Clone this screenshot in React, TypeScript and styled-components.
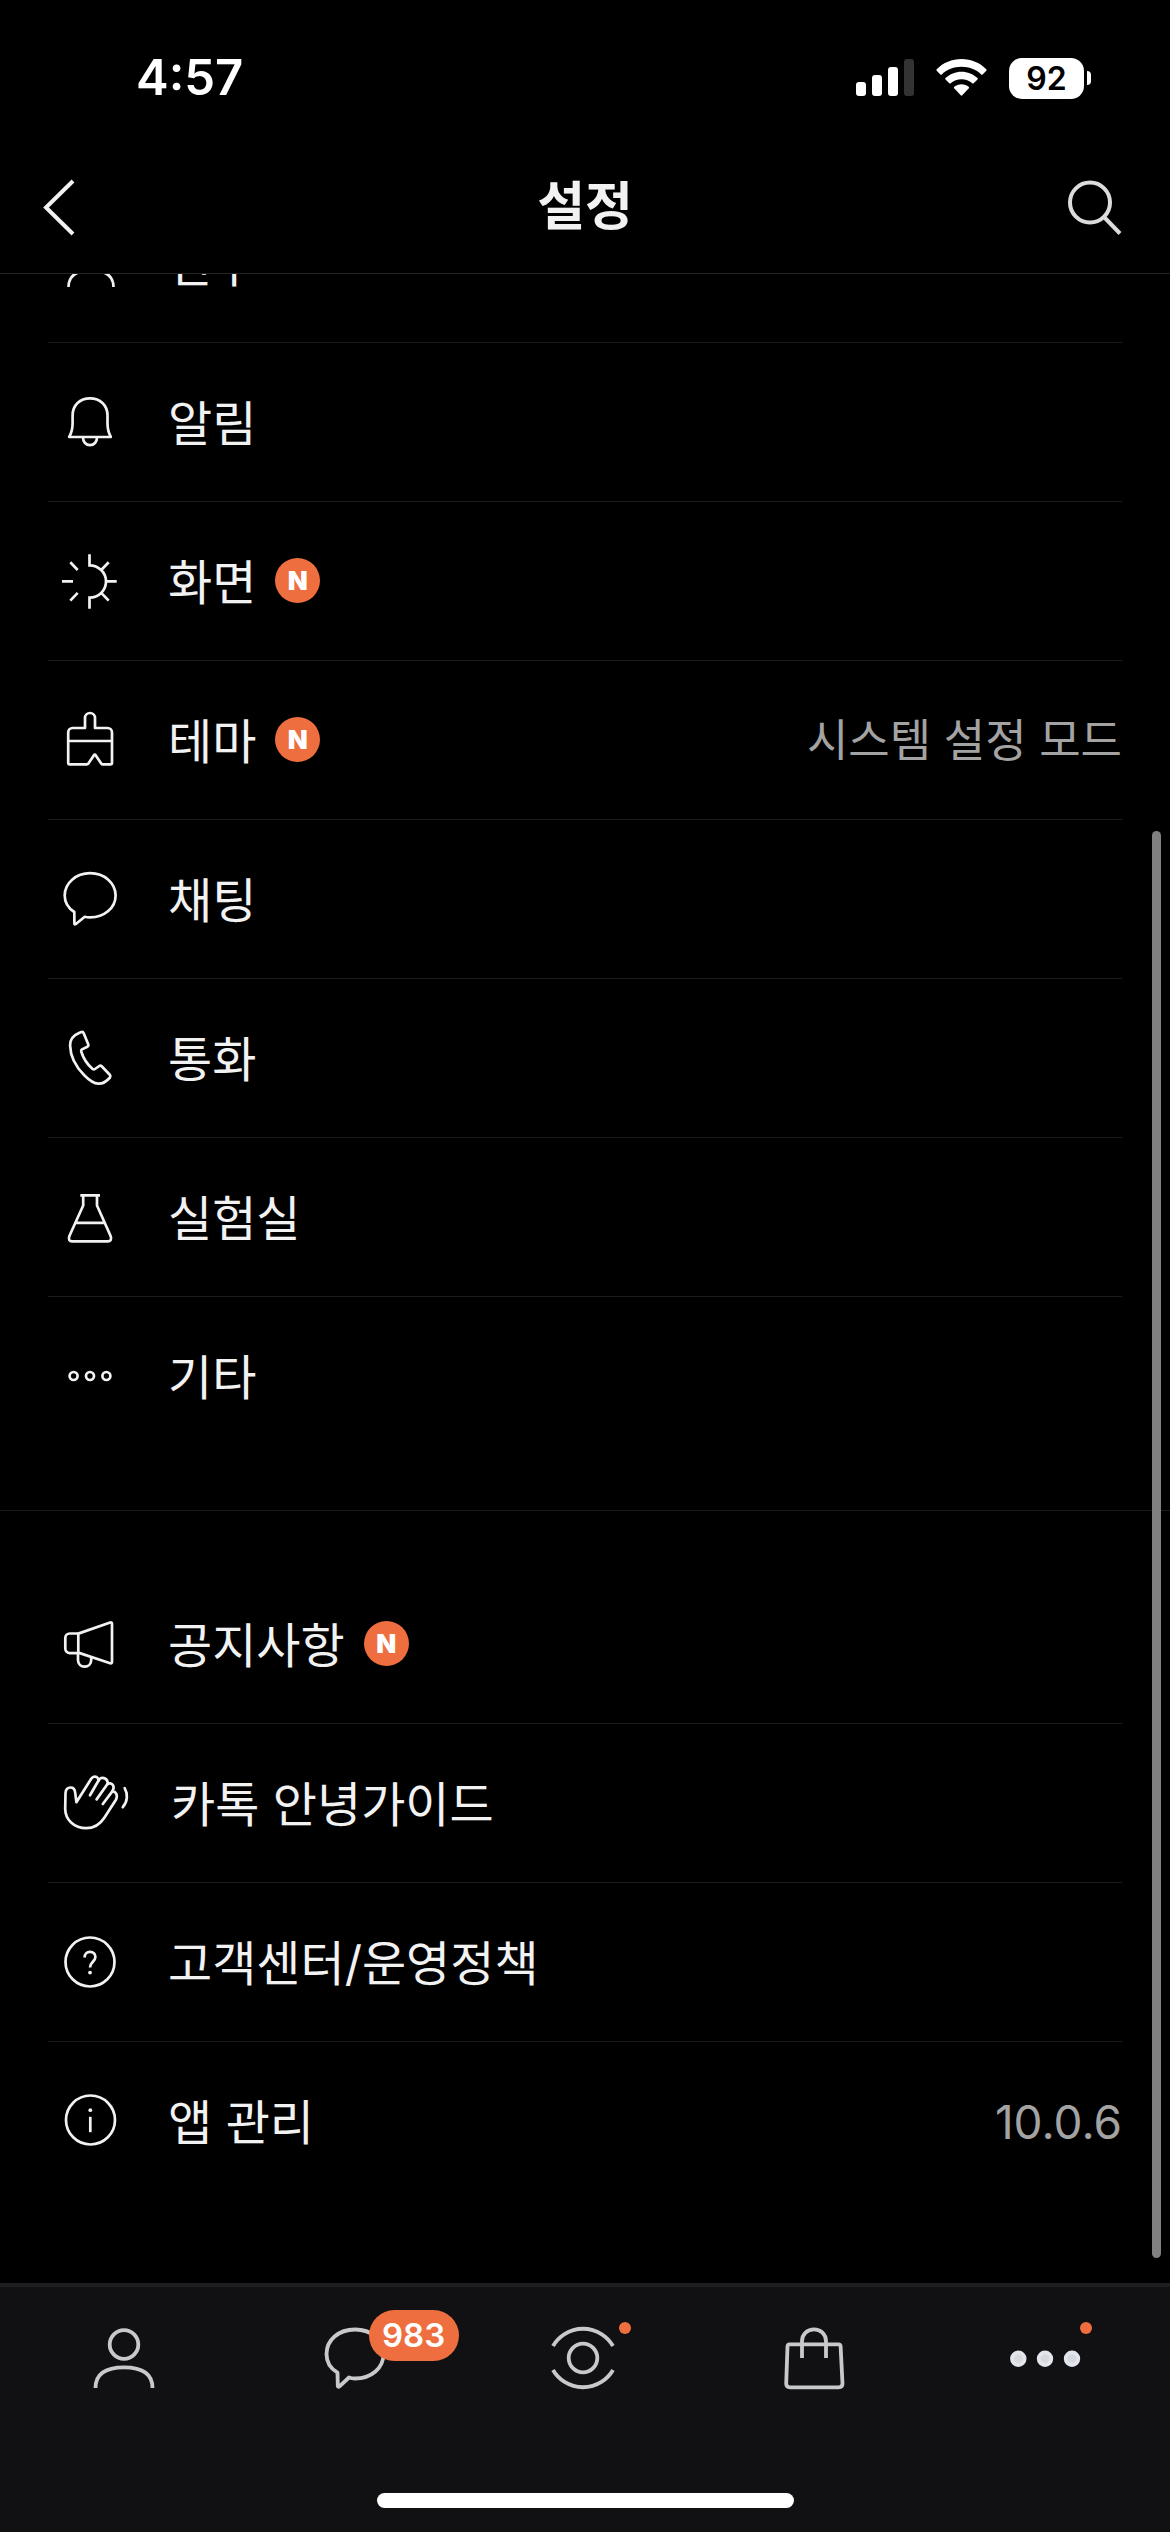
import React from "react";
import styled, { createGlobalStyle } from "styled-components";

const colors = {
  bg: "#000000",
  text: "#f2f2f2",
  muted: "#a3a3a3",
  line: "#1c1c1d",
  accent: "#ee6e3f",
  bar: "#111113",
  barIcon: "#c8c9cb",
};

const GlobalStyle = createGlobalStyle`
  *, *::before, *::after { box-sizing: border-box; }
  body {
    margin: 0;
    background: ${colors.bg};
    color: ${colors.text};
    font-family: Inter, "Noto Sans CJK KR", sans-serif;
  }
  button {
    margin: 0;
    padding: 0;
    border: 0;
    background: none;
    color: inherit;
    font: inherit;
    cursor: pointer;
  }
  svg { display: block; flex: none; }
`;

const Screen = styled.div`
  display: flex;
  flex-direction: column;
  height: 100vh;
  background: ${colors.bg};
`;

const StatusBar = styled.div`
  display: flex;
  align-items: center;
  justify-content: space-between;
  padding: 48px 79px 33px 136px;
`;

const Clock = styled.time`
  font-size: 49px;
  line-height: 60px;
  font-weight: 600;
  color: #ffffff;
`;

const StatusIcons = styled.div`
  display: flex;
  align-items: center;
  gap: 22px;
`;

const Battery = styled.div`
  display: flex;
  align-items: center;
  gap: 3px;
`;

const BatteryLevel = styled.span`
  width: 75px;
  border-radius: 13px;
  background: #ffffff;
  color: #000000;
  font-size: 32px;
  line-height: 41px;
  font-weight: 600;
  text-align: center;
`;

const BatteryTip = styled.span`
  width: 4px;
  height: 14px;
  border-radius: 0 4px 4px 0;
  background: #ffffff;
`;

const NavBar = styled.header`
  display: grid;
  grid-template-columns: 1fr auto 1fr;
  align-items: center;
  padding: 30px 36px;
  border-bottom: 1px solid #262627;
`;

const NavButton = styled.button<{ $side: "start" | "end" }>`
  justify-self: ${(p) => p.$side};
`;

const Title = styled.h1`
  margin: 0;
  font-size: 52px;
  line-height: 72px;
  font-weight: 600;
`;

const Content = styled.main`
  position: relative;
  flex: 1;
  min-height: 0;
  display: flex;
  flex-direction: column;
  justify-content: flex-end;
  padding-bottom: 83px;
  overflow: hidden;
`;

const ScrollThumb = styled.div`
  position: absolute;
  top: 557px;
  right: 9px;
  bottom: 25px;
  width: 9px;
  border-radius: 5px;
  background: #808080;
`;

const Group = styled.ul`
  margin: 0;
  padding: 0 48px;
  list-style: none;

  & + & {
    margin-top: 55px;
    padding-top: 54px;
    border-top: 1px solid ${colors.line};
  }
`;

const Item = styled.li`
  & + & {
    border-top: 1px solid ${colors.line};
  }
`;

const Row = styled.button`
  display: flex;
  align-items: center;
  width: 100%;
  height: 158px;
  text-align: left;
`;

const Label = styled.span`
  margin-left: 36px;
  padding-top: 3px;
  font-size: 48px;
  line-height: 72px;
`;

const NewBadge = styled.span`
  width: 45px;
  margin: 0 0 2px 19px;
  border-radius: 50%;
  background: ${colors.accent};
  color: #ffffff;
  font-size: 26px;
  line-height: 45px;
  font-weight: 900;
  text-align: center;
`;

const Value = styled.span<{ $size: number }>`
  margin-left: auto;
  padding-top: 2px;
  color: ${colors.muted};
  font-size: ${(p) => p.$size}px;
  line-height: 72px;
`;

const TabBar = styled.nav`
  display: flex;
  flex-direction: column;
  align-items: center;
  border-top: 4px solid #1d1e20;
  background: ${colors.bar};
`;

const Tabs = styled.div`
  display: flex;
  width: 100%;
  padding: 35px 9px 99px;
`;

const Tab = styled.button`
  flex: 1;
  display: flex;
  justify-content: center;
`;

const TabIcon = styled.span`
  position: relative;
  color: ${colors.barIcon};
`;

const CountBadge = styled.span`
  position: absolute;
  top: -12px;
  left: 50px;
  width: 90px;
  border-radius: 26px;
  background: ${colors.accent};
  color: #ffffff;
  font-size: 33px;
  line-height: 51px;
  font-weight: 600;
  text-align: center;
`;

const DotBadge = styled.span`
  position: absolute;
  top: 0;
  right: -10px;
  width: 12px;
  height: 12px;
  border-radius: 50%;
  background: ${colors.accent};
`;

const HomeIndicator = styled.div`
  width: 417px;
  height: 15px;
  margin-bottom: 24px;
  border-radius: 8px;
  background: #ffffff;
`;

const RowSvg = styled.svg.attrs<{ $width?: number }>(({ $width = 84 }) => ({
  viewBox: `0 0 ${$width} 84`,
  width: $width,
  height: 84,
  "aria-hidden": true,
}))`
  fill: none;
  stroke: ${colors.text};
  stroke-width: 2.7;
  stroke-linejoin: round;
`;

const TabSvg = styled.svg.attrs({
  viewBox: "0 0 72 72",
  width: 72,
  height: 72,
  "aria-hidden": true,
})`
  fill: none;
  stroke: currentColor;
  stroke-width: 3.8;
  stroke-linejoin: round;
`;

const FriendIcon = () => (
  <RowSvg>
    <circle cx="43" cy="31" r="12" />
    <path d="M20.5 66C20.5 54 29 49.5 43 49.5S65.5 54 65.5 66" />
  </RowSvg>
);

const BellIcon = () => (
  <RowSvg>
    <path d="M21.2 57C24 52 24.6 48 24.6 43V35.5C24.6 25 32 18.3 42 18.3S59.5 25 59.5 35.5V43C59.5 48 60 52 62.8 57Z" />
    <path d="M35 57.5C35 62 38 65.2 42 65.2S49 62 49 57.5" />
  </RowSvg>
);

const DisplayIcon = () => (
  <RowSvg>
    <path d="M41.5 15.3V26.3A16.5 16.2 0 0 1 41.5 58.7V69.7" strokeLinejoin="miter" />
    <path d="M58.5 42.4H68.7M14 42.4H25M22.3 23.3L29.7 31M22.3 61.6L29.7 53.9M60.7 23.3L53.2 31M60.7 61.6L53.2 53.9" />
  </RowSvg>
);

const ThemeIcon = () => (
  <RowSvg>
    <path d="M37 30V20A5 5 0 0 1 47 20V30H59.5A4.5 4.5 0 0 1 64 34.5V64.8Q64 66.3 62.5 66.3H54.8Q53.8 66.3 53.2 65.4L47.8 57.4Q46.8 56 45.8 57.4L40.4 65.4Q39.8 66.3 38.8 66.3H21.7Q20.2 66.3 20.2 64.8V34.5A4.5 4.5 0 0 1 24.7 30Z" />
    <path d="M20.2 43H64" />
  </RowSvg>
);

const ChatIcon = () => (
  <RowSvg>
    <path d="M26.3 55C20.2 51 16.7 45.2 16.7 38.4C16.7 26 28 16.2 42.2 16.2S67.6 26 67.6 38.4S56.3 60.4 42.2 60.4C40.3 60.4 38.3 60.3 36.7 59.8L27.6 67.2Q26.5 67.9 26.4 66.6Z" />
  </RowSvg>
);

const PhoneIcon = () => (
  <RowSvg>
    <path d="M31 17L33.5 16Q35 15.6 35.6 17L40.2 28.3Q40.8 30 39.4 30.7L34 33.4Q32.8 34.2 33.2 35.5C35.2 42 39.5 48.6 44.6 53Q45.8 53.8 47 53L51.3 50Q52.6 49.3 53.7 50.3L62 59Q63 60.3 62 61.5C58.5 65.5 54.5 67.9 50.3 67.7C46.2 67.5 41 64 36.5 59.5C28 51 22.3 40 22.1 29.5C22 23 25.5 19.2 31 17Z" />
  </RowSvg>
);

const FlaskIcon = () => (
  <RowSvg>
    <path d="M32.3 20.4H52M35.2 20.4V30.5L21.4 61Q20.4 63.5 21.3 65Q22.2 66.4 24 66.4H60Q61.8 66.4 62.7 65Q63.6 63.5 62.6 61L49 30.5V20.4M27.5 47.8H56.8" />
  </RowSvg>
);

const EtcIcon = () => (
  <RowSvg>
    <circle cx="25.6" cy="42" r="4" />
    <circle cx="42" cy="42" r="4" />
    <circle cx="58.4" cy="42" r="4" />
  </RowSvg>
);

const NoticeIcon = () => (
  <RowSvg>
    <path d="M30.3 31.5H21.8A4.5 4.5 0 0 0 17.3 36V46.6A4.5 4.5 0 0 0 21.8 51.1H30.3" />
    <path d="M30.3 31.6L62.2 20.5Q64 20 64 21.8V60Q64 61.8 62.2 61.3L30.3 50.6Z" />
    <path d="M30 50.8V58C30 62 32.8 64.6 36.6 64.6S43.2 62 43.2 58V55.2" />
  </RowSvg>
);

const HandIcon = () => (
  <RowSvg $width={87} strokeLinecap="round">
    <path d="M17.2 47.5L17.5 32C17.7 28.6 19.8 26.5 22.6 26.5S26.8 28.6 27.1 31.2L28.4 41.2L43.2 17.8C44.6 15.5 47 15 48.8 16.2C50.1 17 50.6 18.3 50.4 19.8C51.8 17.2 54.4 16 57 17.5C59.3 18.8 60.1 21 59.3 23.2C61.2 21.8 63.5 22.2 64.8 24C66 25.8 65.8 28 64.3 30.4C66 30 67.3 31 68.2 32.6C69.2 34.6 68.9 37 67.6 39.2L56.5 56.5C51.8 63.8 45.8 67.2 38.3 67.2C26 67.2 17.1 58.5 17.2 47.5Z" />
    <path d="M42 34.3L50.4 19.8M48.6 38.4L59.3 23.2M54.8 43L64.3 30.4" />
    <path d="M76.7 27.2C79.9 33 79.8 40.5 74.8 46.2" />
  </RowSvg>
);

const HelpIcon = () => (
  <RowSvg>
    <circle cx="42" cy="42" r="24.5" />
    <path d="M36.6 37.4C36.6 34 38.8 31.8 42 31.8S47.4 34 47.4 37C47.4 41.5 42 42 42 47.4" />
    <circle cx="42" cy="52.6" r="1.9" fill={colors.text} stroke="none" />
  </RowSvg>
);

const InfoIcon = () => (
  <RowSvg>
    <circle cx="42.5" cy="41" r="24.5" />
    <path d="M42.3 37.8V53.2" />
    <circle cx="42.3" cy="31.2" r="1.9" fill={colors.text} stroke="none" />
  </RowSvg>
);

type Entry = {
  icon: React.FC;
  label: string;
  isNew?: boolean;
  value?: string;
  valueSize?: number;
};

const groups: Entry[][] = [
  [
    { icon: FriendIcon, label: "친구" },
    { icon: BellIcon, label: "알림" },
    { icon: DisplayIcon, label: "화면", isNew: true },
    { icon: ThemeIcon, label: "테마", isNew: true, value: "시스템 설정 모드" },
    { icon: ChatIcon, label: "채팅" },
    { icon: PhoneIcon, label: "통화" },
    { icon: FlaskIcon, label: "실험실" },
    { icon: EtcIcon, label: "기타" },
  ],
  [
    { icon: NoticeIcon, label: "공지사항", isNew: true },
    { icon: HandIcon, label: "카톡 안녕가이드" },
    { icon: HelpIcon, label: "고객센터/운영정책" },
    { icon: InfoIcon, label: "앱 관리", value: "10.0.6", valueSize: 46 },
  ],
];

const SignalIcon = () => (
  <svg width="58" height="38" viewBox="0 0 58 38" fill="#ffffff" aria-hidden="true">
    <rect x="0" y="23" width="10" height="14" rx="3" />
    <rect x="16" y="16" width="10" height="21" rx="3" />
    <rect x="32" y="8" width="10" height="29" rx="3" />
    <rect x="48" y="0" width="10" height="37" rx="3" fill="#333333" />
  </svg>
);

const WifiIcon = () => (
  <svg width="51" height="38" viewBox="0 0 51 38" fill="#ffffff" aria-hidden="true">
    <path d="M25.5 0C35 0 43.8 3.7 50.3 10.2Q51 11 50.3 11.7L46.6 15.4Q45.9 16 45.2 15.4C40 10.5 33 7.8 25.5 7.8S11 10.5 5.8 15.4Q5.1 16 4.4 15.4L0.7 11.7Q0 11 0.7 10.2C7.2 3.7 16 0 25.5 0Z" />
    <path d="M25.5 12.7C31.5 12.7 37.2 15 41.5 19Q42.2 19.7 41.5 20.5L37.7 24.2Q37 24.9 36.3 24.2C33.3 21.7 29.5 20.3 25.5 20.3S17.7 21.7 14.7 24.2Q14 24.9 13.3 24.2L9.5 20.5Q8.8 19.7 9.5 19C13.8 15 19.5 12.7 25.5 12.7Z" />
    <path d="M25.5 25.2C28.2 25.2 30.7 26.1 32.7 27.8Q33.5 28.5 32.8 29.3L26.3 36.3Q25.5 37 24.7 36.3L18.2 29.3Q17.5 28.5 18.3 27.8C20.3 26.1 22.8 25.2 25.5 25.2Z" />
  </svg>
);

export default function App() {
  return (
    <>
      <GlobalStyle />
      <Screen>
        <StatusBar>
          <Clock>4:57</Clock>
          <StatusIcons>
            <SignalIcon />
            <WifiIcon />
            <Battery>
              <BatteryLevel>92</BatteryLevel>
              <BatteryTip />
            </Battery>
          </StatusIcons>
        </StatusBar>

        <NavBar>
          <NavButton $side="start" type="button" aria-label="뒤로">
            <svg width="48" height="72" viewBox="0 0 48 72" fill="none" stroke="#f2f2f2" strokeWidth="4">
              <path d="M37 10L10 36.5L37 63" />
            </svg>
          </NavButton>
          <Title>설정</Title>
          <NavButton $side="end" type="button" aria-label="검색">
            <svg width="72" height="72" viewBox="0 0 72 72" fill="none" stroke="#dcdcdc" strokeWidth="4">
              <circle cx="28" cy="31.5" r="20" />
              <path d="M42 46L58 62.5" />
            </svg>
          </NavButton>
        </NavBar>

        <Content>
          {groups.map((entries, index) => (
            <Group key={index}>
              {entries.map(({ icon: Icon, label, isNew, value, valueSize = 45 }) => (
                <Item key={label}>
                  <Row type="button">
                    <Icon />
                    <Label>{label}</Label>
                    {isNew && <NewBadge>N</NewBadge>}
                    {value && <Value $size={valueSize}>{value}</Value>}
                  </Row>
                </Item>
              ))}
            </Group>
          ))}
          <ScrollThumb />
        </Content>

        <TabBar>
          <Tabs>
            <Tab type="button" aria-label="친구 목록">
              <TabIcon>
                <TabSvg>
                  <circle cx="36" cy="22.5" r="14.3" />
                  <path d="M7.5 66C7.5 51.5 18 45.3 36 45.3S64.5 51.5 64.5 66" />
                </TabSvg>
              </TabIcon>
            </Tab>
            <Tab type="button" aria-label="채팅 목록">
              <TabIcon>
                <TabSvg>
                  <path d="M18.5 50.7C11.5 46.5 7.5 40 7.5 32C7.5 18 19.5 7.5 36 7.5S64.5 18 64.5 32S52.5 56.5 36 56.5C34 56.5 32 56.3 30 55.5L20.5 64.3Q19 65.5 18.8 63.8Z" />
                </TabSvg>
                <CountBadge>983</CountBadge>
              </TabIcon>
            </Tab>
            <Tab type="button" aria-label="오픈채팅">
              <TabIcon>
                <TabSvg>
                  <circle cx="34" cy="36" r="14.3" />
                  <path d="M4 24A34.7 34.7 0 0 1 64 24M4 48A34.7 34.7 0 0 0 64 48" />
                </TabSvg>
                <DotBadge />
              </TabIcon>
            </Tab>
            <Tab type="button" aria-label="쇼핑">
              <TabIcon>
                <TabSvg>
                  <path d="M10.5 22.3H59.5Q61.5 22.3 61.6 24.3L63.5 61.5Q63.5 65.3 59.7 65.3H11Q7.2 65.3 7.2 61.5L8.5 24.3Q8.6 22.3 10.5 22.3Z" />
                  <path d="M23 36V19C23 12 28.5 7.3 35 7.3S47 12 47 19V36" />
                </TabSvg>
              </TabIcon>
            </Tab>
            <Tab type="button" aria-label="더보기">
              <TabIcon>
                <TabSvg>
                  {[8.3, 35, 62].map((x) => (
                    <circle key={x} cx={x} cy="36.7" r="6.3" fill="#d8d9db" stroke="#e4e6ee" />
                  ))}
                </TabSvg>
                <DotBadge />
              </TabIcon>
            </Tab>
          </Tabs>
          <HomeIndicator />
        </TabBar>
      </Screen>
    </>
  );
}
